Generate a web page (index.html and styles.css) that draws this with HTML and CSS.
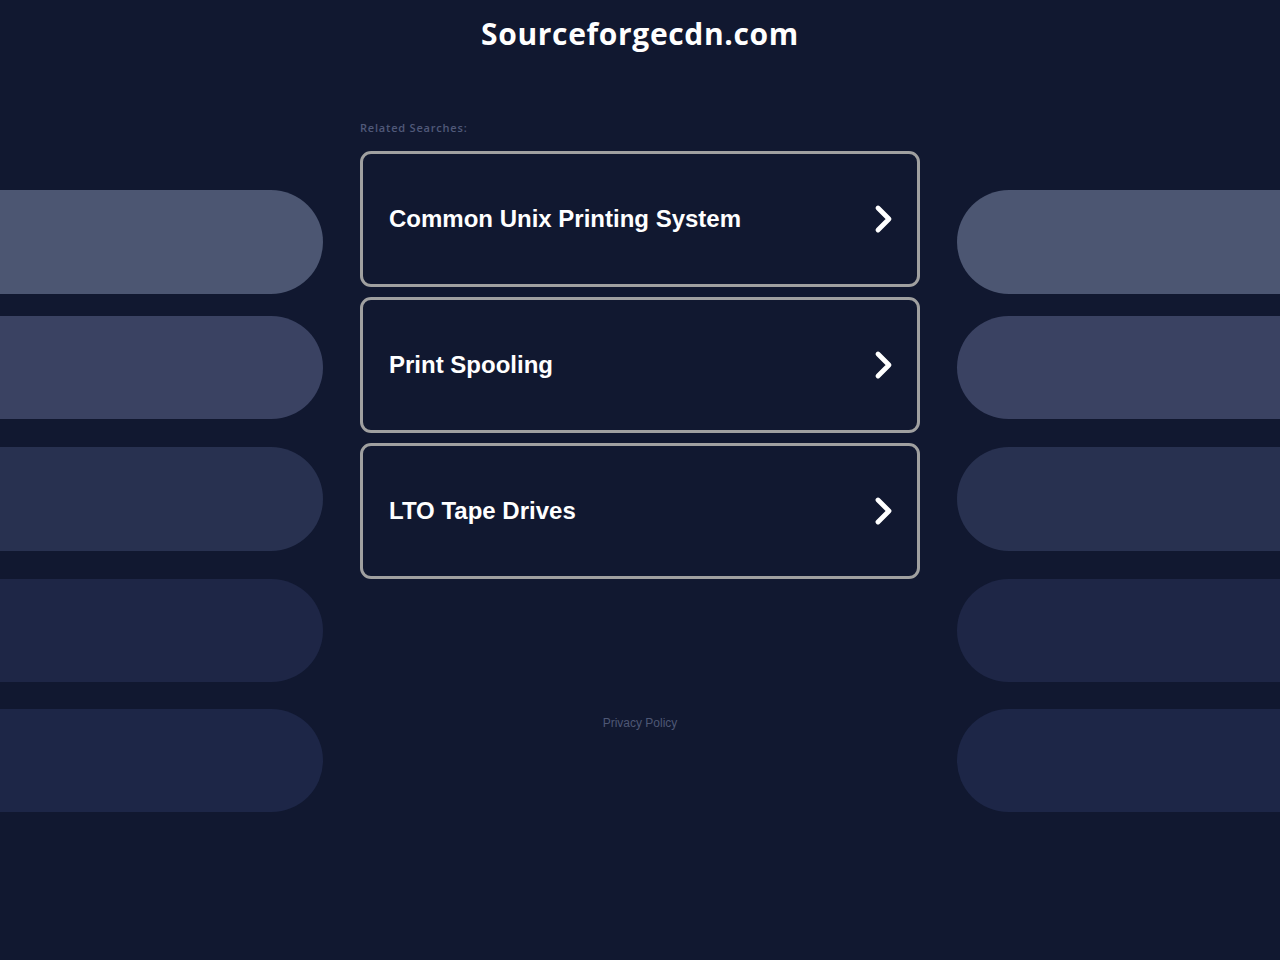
FILE: index.html
```html
<!DOCTYPE html>
<html lang="en">
<head>
<meta charset="utf-8">
<title>Sourceforgecdn.com</title>
<link rel="stylesheet" href="styles.css">
</head>
<body>
<header class="header">
  <h1 class="title">Sourceforgecdn.com</h1>
</header>
<main class="layout">
  <div class="side side-left">
    <div class="pill p1"></div>
    <div class="pill p2"></div>
    <div class="pill p3"></div>
    <div class="pill p4"></div>
    <div class="pill p5"></div>
  </div>
  <section class="center">
    <div class="label">Related Searches:</div>
    <div class="cards">
      <a class="card" href="#">
        <span class="card-text">Common Unix Printing System</span>
        <svg class="chev" width="22" height="30" viewBox="0 0 22 30"><polyline points="5,4 16,15 5,26" fill="none" stroke="#fff" stroke-width="4.8" stroke-linecap="round" stroke-linejoin="round"/></svg>
      </a>
      <a class="card" href="#">
        <span class="card-text">Print Spooling</span>
        <svg class="chev" width="22" height="30" viewBox="0 0 22 30"><polyline points="5,4 16,15 5,26" fill="none" stroke="#fff" stroke-width="4.8" stroke-linecap="round" stroke-linejoin="round"/></svg>
      </a>
      <a class="card" href="#">
        <span class="card-text">LTO Tape Drives</span>
        <svg class="chev" width="22" height="30" viewBox="0 0 22 30"><polyline points="5,4 16,15 5,26" fill="none" stroke="#fff" stroke-width="4.8" stroke-linecap="round" stroke-linejoin="round"/></svg>
      </a>
    </div>
    <div class="privacy"><a href="#">Privacy Policy</a></div>
  </section>
  <div class="side side-right">
    <div class="pill p1"></div>
    <div class="pill p2"></div>
    <div class="pill p3"></div>
    <div class="pill p4"></div>
    <div class="pill p5"></div>
  </div>
</main>
</body>
</html>
```

FILE: styles.css
```css
html, body {
  margin: 0;
  padding: 0;
  background: #111830;
  height: 100%;
}
body {
  font-family: "Liberation Sans", Arial, sans-serif;
  color: #fff;
}
.header {
  display: flex;
  justify-content: center;
  padding-top: 14px;
}
.title {
  margin: 0;
  font-family: "Open Sans", "Liberation Sans", sans-serif;
  font-weight: 700;
  font-size: 30px;
  line-height: 40px;
  color: #fff;
  letter-spacing: 0.65px;
}
.layout {
  display: grid;
  grid-template-columns: 323px 1fr 323px;
  column-gap: 37px;
  margin-top: 66px;
}
.side {
  display: flex;
  flex-direction: column;
  padding-top: 70px;
}
.pill {
  height: 104px;
}
.side-left .pill { border-radius: 0 52px 52px 0; }
.side-right .pill { border-radius: 52px 0 0 52px; }
.pill + .pill { margin-top: 27px; }
.p2 { margin-top: 22px !important; height: 103px; }
.p3 { margin-top: 28px !important; }
.p4 { margin-top: 28px !important; height: 103px; }
.p5 { margin-top: 27px !important; height: 103px; }
.p1 { background: #4c5672; }
.p2 { background: #3a4262; }
.p3 { background: #283150; }
.p4 { background: #1e2646; }
.p5 { background: #1d2647; }
.center {
  display: flex;
  flex-direction: column;
}
.label {
  font-family: "Open Sans", "Liberation Sans", sans-serif;
  font-size: 11px;
  line-height: 16px;
  color: #505979;
  font-weight: 600;
  letter-spacing: 0.8px;
  margin-bottom: 15px;
}
.cards {
  display: flex;
  flex-direction: column;
  gap: 10px;
}
.card {
  display: flex;
  align-items: center;
  justify-content: space-between;
  height: 130px;
  border: 3px solid #a0a0a0;
  border-radius: 11px;
  padding: 0 22px 0 26px;
  text-decoration: none;
  color: #fff;
}
.card-text {
  font-family: "Liberation Sans", Arial, sans-serif;
  font-weight: 700;
  font-size: 24px;
}
.chev {
  display: block;
}
.privacy {
  text-align: center;
  margin-top: 137px;
  font-size: 12px;
  line-height: 14px;
}
.privacy a {
  color: #4e5775;
  text-decoration: none;
}
```
